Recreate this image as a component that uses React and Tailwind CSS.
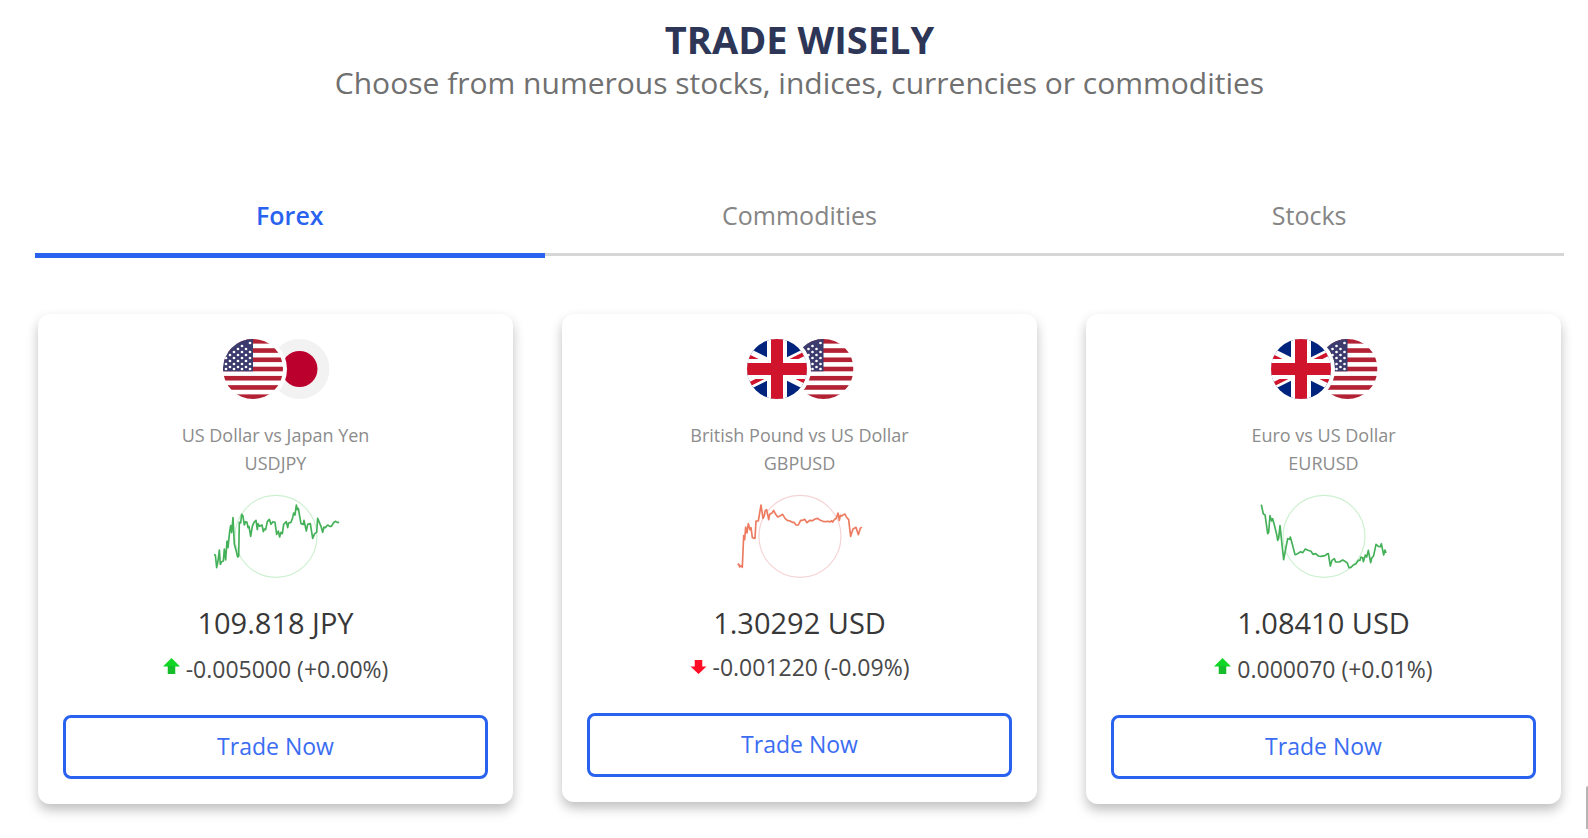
import { useState } from "react";

const STRIPES = [0, 1, 2, 3, 4, 5, 6];
const STARS = [
  [27, 4], [19, 7], [23, 10], [27, 13], [15, 10], [19, 13], [11, 13], [7, 16], [15, 16], [23, 16],
  [3, 19], [11, 19], [19, 19], [27, 19], [7, 22], [15, 22], [23, 22], [3, 25], [11, 25], [19, 25],
  [27, 25], [7, 28], [15, 28], [23, 28], [3, 30], [11, 30], [19, 30], [27, 30],
];

function UsaFlag() {
  return (
    <g>
      <rect width="60" height="60" fill="#fff" />
      {STRIPES.map((i) => (
        <rect key={i} y={i * 9.23} width="60" height="4.62" fill="#b22234" />
      ))}
      <rect width="30" height="32.3" fill="#3c3b6e" />
      {STARS.map(([x, y]) => (
        <circle key={x + "-" + y} cx={x} cy={y} r="1.35" fill="#fff" />
      ))}
    </g>
  );
}

function JapanFlag() {
  return (
    <g>
      <rect width="60" height="60" fill="#f2f2f2" />
      <circle cx="30" cy="30" r="18" fill="#bc002d" />
    </g>
  );
}

function BritainFlag() {
  return (
    <g>
      <rect width="60" height="60" fill="#00247d" />
      <path d="M-30 0 L90 60 M90 0 L-30 60" stroke="#fff" strokeWidth="12" />
      <path d="M-30 1.5 L30 31.5 M90 58.5 L30 28.5" stroke="#cf142b" strokeWidth="4" />
      <path d="M90 -1.5 L30 28.5 M-30 61.5 L30 31.5" stroke="#cf142b" strokeWidth="4" />
      <path d="M30 0 V60 M0 30 H60" stroke="#fff" strokeWidth="20" />
      <path d="M30 0 V60 M0 30 H60" stroke="#cf142b" strokeWidth="12" />
    </g>
  );
}

function FlagPair({ id, Front, Back }) {
  return (
    <svg className="h-[66px] w-[108px]" viewBox="0 0 108 66" aria-hidden="true">
      <defs>
        <clipPath id={id}>
          <circle cx="30" cy="30" r="30" />
        </clipPath>
      </defs>
      <g transform="translate(47.500 3)">
        <g clipPath={"url(#" + id + ")"}>
          <Back />
        </g>
      </g>
      <circle cx="31" cy="33" r="34" fill="#fff" />
      <g transform="translate(1 3)">
        <g clipPath={"url(#" + id + ")"}>
          <Front />
        </g>
      </g>
    </svg>
  );
}

function Sparkline({ points, stroke, ring }) {
  return (
    <svg className="h-[100px] w-[150px]" viewBox="0 0 450 300" fill="none" aria-hidden="true">
      <circle cx="225" cy="154" r="123" stroke={ring} strokeWidth="3.5" />
      <polyline points={points} stroke={stroke} strokeWidth="5" strokeLinejoin="round" />
    </svg>
  );
}

function Arrow({ up }) {
  return up ? (
    <svg className="mb-[6px] h-4 w-[17px]" viewBox="0 0 18 17" aria-hidden="true">
      <path d="M9 0 L18 9 H0 Z" fill="#0fd624" />
      <path d="M5 8.5 H13 V17 H5 Z" fill="#16bd2b" />
    </svg>
  ) : (
    <svg className="h-4 w-[17px]" viewBox="0 0 18 17" aria-hidden="true">
      <path d="M5 1 H13 V8 H17.500 L9 16 L0.500 8 H5 Z" fill="#ff0d26" />
    </svg>
  );
}

const GREEN = { stroke: "#44b058", ring: "#cdf0d0" };
const RED = { stroke: "#ec7b60", ring: "#f5d3d3" };

const PAIRS = [
  {
    name: "US Dollar vs Japan Yen",
    code: "USDJPY",
    price: "109.818 JPY",
    change: "-0.005000 (+0.00%)",
    up: true,
    Front: UsaFlag,
    Back: JapanFlag,
    colors: GREEN,
    points:
      "39,209 43,210 47,248 51,228 55,195 58,238 62,230 67,228 70,192 74,225 78,168 81,188 86,140 89,122 92,143 96,98 100,178 105,195 110,216 113,214 115,112 119,114 122,88 126,94 130,120 134,110 138,112 141,128 144,124 149,154 154,124 159,112 165,106 169,134 171,116 176,124 183,120 187,140 190,132 194,134 199,110 205,103 210,118 216,110 222,112 227,148 232,138 236,156 240,142 244,146 248,118 256,110 260,128 263,114 270,112 275,98 278,84 282,90 286,60 289,74 292,70 300,116 307,118 309,106 316,138 320,118 328,116 335,160 341,146 347,142 350,100 354,110 360,124 365,142 369,126 373,128 380,120 386,124 391,124 399,112 404,109 410,113 414,111",
  },
  {
    name: "British Pound vs US Dollar",
    code: "GBPUSD",
    price: "1.30292 USD",
    change: "-0.001220 (-0.09%)",
    up: false,
    Front: BritainFlag,
    Back: UsaFlag,
    colors: RED,
    points:
      "38,240 41,237 44,246 48,242 52,247 56,152 59,164 62,126 66,144 70,116 75,134 78,128 82,158 90,160 93,108 100,108 104,84 108,60 114,100 118,92 120,78 125,74 131,104 134,88 141,84 146,76 152,88 158,96 166,92 173,88 180,100 187,106 195,108 202,112 207,112 213,120 220,120 227,106 233,106 239,103 246,113 254,106 263,107 270,102 278,100 286,106 294,109 302,110 310,109 315,111 320,107 323,111 329,103 334,100 339,84 343,106 346,91 350,93 354,90 360,87 364,96 371,104 374,130 377,154 384,132 393,127 400,149 406,130 410,126",
  },
  {
    name: "Euro vs US Dollar",
    code: "EURUSD",
    price: "1.08410 USD",
    change: "0.000070 (+0.01%)",
    up: true,
    Front: BritainFlag,
    Back: UsaFlag,
    colors: GREEN,
    points:
      "37,59 43,87 48,89 53,124 56,146 59,142 63,92 68,108 71,101 77,124 83,148 86,166 89,160 93,122 99,178 104,224 110,192 116,161 122,163 124,156 129,174 138,209 146,206 150,203 155,200 161,203 169,192 177,196 186,199 192,208 200,206 208,213 216,214 228,212 234,207 238,206 244,243 249,226 256,221 260,231 271,231 281,225 288,229 295,234 300,248 306,247 313,240 321,236 328,226 333,226 336,216 341,218 343,230 349,210 353,216 358,196 365,233 368,220 374,212 381,178 388,184 394,185 397,176 404,210 408,195 411,204",
  },
];

const TABS = ["Forex", "Commodities", "Stocks"];

function PairCard({ pair, index }) {
  return (
    <article className="flex flex-col items-center rounded-xl bg-white px-[25px] pt-[22px] pb-[25px] shadow-[0_6px_12px_rgba(0,0,0,0.25)]">
      <FlagPair id={"flag-" + index} Front={pair.Front} Back={pair.Back} />
      <h2 className="mt-[19px] text-center text-lg leading-7 text-[#8c8c8c]">{pair.name}</h2>
      <p className="text-lg leading-7 text-[#8c8c8c]">{pair.code}</p>
      <div className="mt-2">
        <Sparkline points={pair.points} {...pair.colors} />
      </div>
      <p className="mt-[18px] text-[29px] leading-10 text-[#383838]">{pair.price}</p>
      <p className={"flex items-center gap-[6px] text-[23px] leading-8 text-[#484848] " + (pair.up ? "mt-[10px]" : "mt-2")}>
        <Arrow up={pair.up} />
        {pair.change}
      </p>
      <button
        type="button"
        className="mt-[30px] h-16 w-full cursor-pointer rounded-lg border-[3px] border-[#2962ef] pb-[2px] text-[23px] text-[#3b6df2]"
      >
        Trade Now
      </button>
    </article>
  );
}

export default function App() {
  const [active, setActive] = useState("Forex");
  return (
    <main className="min-h-screen bg-white pt-[13px] pr-6 pb-8 pl-[35px] font-['Open_Sans',sans-serif]">
      <header className="text-center">
        <h1 className="text-[38px] leading-[52px] font-bold text-[#2d3656]">TRADE WISELY</h1>
        <p className="mt-[1px] text-[30px] leading-[34px] text-[#707070]">
          Choose from numerous stocks, indices, currencies or commodities
        </p>
      </header>

      <nav className="mt-[78px] grid h-20 grid-cols-3">
        {TABS.map((tab) => (
          <button
            key={tab}
            type="button"
            aria-pressed={tab === active}
            onClick={() => setActive(tab)}
            className={
              "cursor-pointer text-[25px] " +
              (tab === active
                ? "h-20 border-b-[5px] border-[#2962ef] font-semibold text-[#2962ef]"
                : "h-[78px] border-b-[3px] border-[#d6d6d6] text-[#858585]")
            }
          >
            {tab}
          </button>
        ))}
      </nav>

      <section className="mt-14 grid grid-cols-3 items-start gap-[49px] pr-[3px] pl-[3px]">
        {PAIRS.map((pair, i) => (
          <PairCard key={pair.code} pair={pair} index={i} />
        ))}
      </section>

      <div className="fixed right-0 bottom-[9px] h-[43px] w-[2px] rounded-tl-sm bg-[#b5b5b5]" />
    </main>
  );
}
